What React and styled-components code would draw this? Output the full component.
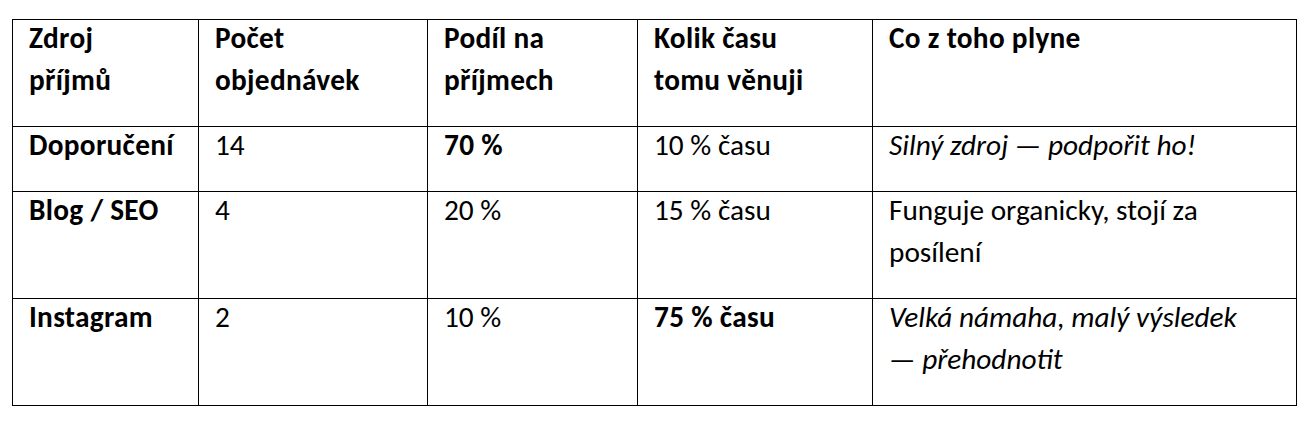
import React from 'react';
import styled, {createGlobalStyle} from 'styled-components';

const ROWS = [
  {
    source: 'Doporučení',
    orders: '14',
    share: '70 %',
    shareStrong: true,
    time: '10 % času',
    note: 'Silný zdroj — podpořit ho!',
    noteItalic: true,
  },
  {
    source: 'Blog / SEO',
    orders: '4',
    share: '20 %',
    time: '15 % času',
    note: 'Funguje organicky, stojí za posílení',
  },
  {
    source: 'Instagram',
    orders: '2',
    share: '10 %',
    time: '75 % času',
    timeStrong: true,
    // nbsp keeps the dash with the last word, like the original wrap
    note: 'Velká námaha, malý výsledek —\u00a0přehodnotit',
    noteItalic: true,
  },
];

const COLUMNS = [186, 229, 210, 235, 424];

const App = () => (
  <>
    <GlobalStyle />
    <Page>
      <Table>
        <colgroup>
          {COLUMNS.map((w, i) => (
            <Col key={i} $width={w} />
          ))}
        </colgroup>
        <thead>
          <tr>
            <HeadCell><Text>Zdroj<br />příjmů</Text></HeadCell>
            <HeadCell><Text>Počet<br />objednávek</Text></HeadCell>
            <HeadCell><Text>Podíl na<br />příjmech</Text></HeadCell>
            <HeadCell><Text>Kolik času<br />tomu věnuji</Text></HeadCell>
            <HeadCell><Text>Co z toho plyne</Text></HeadCell>
          </tr>
        </thead>
        <tbody>
          {ROWS.map(row => (
            <tr key={row.source}>
              <Cell $bold><Text>{row.source}</Text></Cell>
              <Cell><Text>{row.orders}</Text></Cell>
              <Cell $bold={row.shareStrong}><Text>{row.share}</Text></Cell>
              <Cell $bold={row.timeStrong}><Text>{row.time}</Text></Cell>
              <Cell $italic={row.noteItalic}><Text>{row.note}</Text></Cell>
            </tr>
          ))}
        </tbody>
      </Table>
    </Page>
  </>
);

export default App;

/******************************************************************
** Styled Components
*/
const GlobalStyle = createGlobalStyle`
  body {
    margin: 0;
    background: #fff;
    font-family: Carlito, Calibri, Lato, "Liberation Sans", sans-serif;
    color: #000;
  }
`;

const Page = styled.div`
  padding: 19px 0 0 12px;
`;

const Table = styled.table`
  border-collapse: collapse;
  table-layout: fixed;
  width: 1285px;
`;

const Col = styled.col`
  width: ${p => p.$width}px;
`;

const Cell = styled.td`
  border: 1px solid #000;
  vertical-align: top;
  padding: 0 16px 25px 16px;
  font-size: 29.3px;
  line-height: 42px;
  font-weight: ${p => (p.$bold ? 700 : 400)};
  font-style: ${p => (p.$italic ? 'italic' : 'normal')};
  letter-spacing: ${p => (p.$bold ? '0.3px' : '0')};
`;

const HeadCell = styled(Cell).attrs({as: 'th', $bold: true})`
  text-align: left;
`;

const Text = styled.div`
  margin-top: -3px;
`;
